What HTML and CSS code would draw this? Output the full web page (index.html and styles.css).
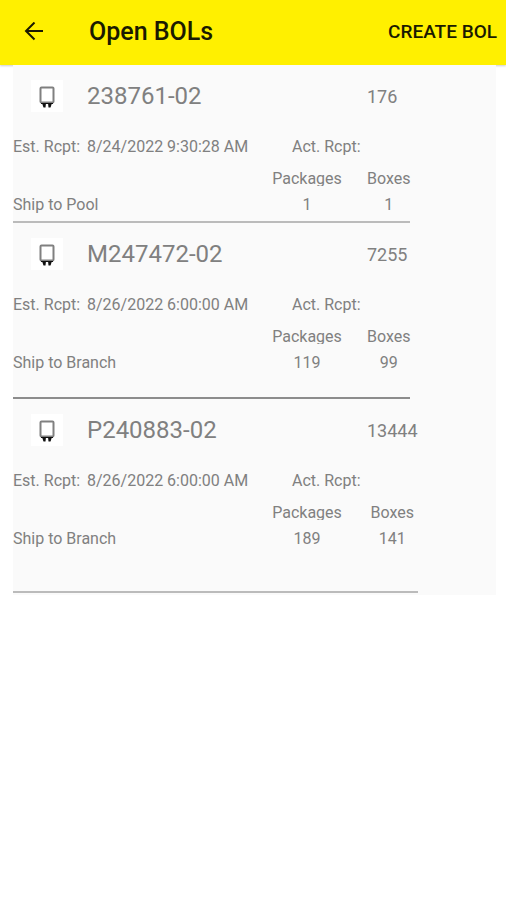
FILE: index.html
```html
<!DOCTYPE html>
<html lang="en">

<head>
  <meta charset="UTF-8">
  <meta name="viewport" content="width=device-width, initial-scale=1.0">
  <title>Open BOLs</title>
  <link rel="stylesheet" href="styles.css">
</head>

<body>
  <header class="bar">
    <button class="back" type="button" aria-label="Back">
      <svg width="20" height="20" viewBox="0 0 20 20" fill="none" stroke="currentColor" stroke-width="2">
        <path d="M20 9H3M11.5 .5L3 9l8.5 8.5" />
      </svg>
    </button>
    <h1>Open BOLs</h1>
    <button class="create" type="button">CREATE BOL</button>
  </header>

  <main>
    <ul class="list">
      <li class="bol short">
        <span class="icon">
          <svg width="16" height="24" viewBox="0 0 16 24">
            <rect x="1.5" y="3.5" width="13" height="15" rx="1" fill="none" stroke="#808080" stroke-width="2" />
            <path d="M2 19h12v1H2zM3 19h4l-.5 4.500h-2zM9 19h4l-1.500 4.500h-2z" fill="#111" />
          </svg>
        </span>
        <h2>238761-02</h2>
        <span class="weight">176</span>
        <span class="est">Est. Rcpt:</span>
        <span class="date">8/24/2022 9:30:28 AM</span>
        <span class="act">Act. Rcpt:</span>
        <span class="head">Packages</span>
        <span class="boxes">Boxes</span>
        <span class="ship">Ship to Pool</span>
        <span class="count">1</span>
        <span class="boxes">1</span>
      </li>
      <li class="bol dark">
        <span class="icon">
          <svg width="16" height="24" viewBox="0 0 16 24">
            <rect x="1.5" y="3.5" width="13" height="15" rx="1" fill="none" stroke="#808080" stroke-width="2" />
            <path d="M2 19h12v1H2zM3 19h4l-.5 4.500h-2zM9 19h4l-1.500 4.500h-2z" fill="#111" />
          </svg>
        </span>
        <h2>M247472-02</h2>
        <span class="weight">7255</span>
        <span class="est">Est. Rcpt:</span>
        <span class="date">8/26/2022 6:00:00 AM</span>
        <span class="act">Act. Rcpt:</span>
        <span class="head">Packages</span>
        <span class="boxes">Boxes</span>
        <span class="ship">Ship to Branch</span>
        <span class="count">119</span>
        <span class="boxes">99</span>
      </li>
      <li class="bol tall">
        <span class="icon">
          <svg width="16" height="24" viewBox="0 0 16 24">
            <rect x="1.5" y="3.5" width="13" height="15" rx="1" fill="none" stroke="#808080" stroke-width="2" />
            <path d="M2 19h12v1H2zM3 19h4l-.5 4.500h-2zM9 19h4l-1.500 4.500h-2z" fill="#111" />
          </svg>
        </span>
        <h2>P240883-02</h2>
        <span class="weight">13444</span>
        <span class="est">Est. Rcpt:</span>
        <span class="date">8/26/2022 6:00:00 AM</span>
        <span class="act">Act. Rcpt:</span>
        <span class="head">Packages</span>
        <span class="boxes">Boxes</span>
        <span class="ship">Ship to Branch</span>
        <span class="count">189</span>
        <span class="boxes">141</span>
      </li>
    </ul>
  </main>
</body>

</html>
```

FILE: styles.css
```css
html,
body {
  margin: 0;
  padding: 0;
  background: #fff;
}

body {
  font-family: Roboto, "Liberation Sans", sans-serif;
  font-size: 16px;
  color: #808080;
}

button {
  margin: 0;
  padding: 0;
  border: 0;
  background: none;
  font: inherit;
  color: inherit;
  cursor: pointer;
}

h1,
h2 {
  margin: 0;
}

/* top bar */
.bar {
  display: flex;
  align-items: center;
  height: 65px;
  padding: 0 9px 2px 23px;
  box-sizing: border-box;
  background: #fff000;
  color: #1a1a00;
  box-shadow: 0 1px 2px rgba(0, 0, 0, .2);
}

.back {
  display: flex;
  width: 66px;
}

.bar h1 {
  flex: 1;
  font-size: 25px;
  font-weight: 500;
}

.create {
  font-size: 19px;
  font-weight: 500;
}

/* list */
.list {
  list-style: none;
  margin: 0 10px 0 13px;
  padding: 0 0 2px;
  background: #fafafa;
}

.bol {
  display: grid;
  grid-template-columns: 74px 185px 70px auto;
  grid-template-rows: 62px 38px 26px 26px;
  align-items: center;
  width: fit-content;
  padding-bottom: 22px;
  border-bottom: 2px solid #bbb;
  white-space: nowrap;
}

.bol.short {
  padding-bottom: 4px;
}

.bol.dark {
  border-color: #8c8c8c;
}

.bol.tall {
  padding-bottom: 40px;
}

.icon {
  display: flex;
  align-items: center;
  justify-content: center;
  width: 32px;
  height: 32px;
  margin-left: 18px;
  background: #fff;
}

.bol h2 {
  grid-column: 2;
  font-size: 24px;
  font-weight: 400;
}

.weight {
  grid-column: 4;
  margin-left: 25px;
  font-size: 18px;
}

.act {
  grid-column: 3 / 5;
  margin-left: 20px;
}

.head {
  grid-column: 3;
  height: 16px;
  line-height: 18px;
  text-align: center;
  overflow: hidden;
}

.ship {
  grid-column: 1 / 3;
}

.count {
  grid-column: 3;
  text-align: center;
}

.boxes {
  grid-column: 4;
  margin-left: 25px;
  text-align: center;
}
```
